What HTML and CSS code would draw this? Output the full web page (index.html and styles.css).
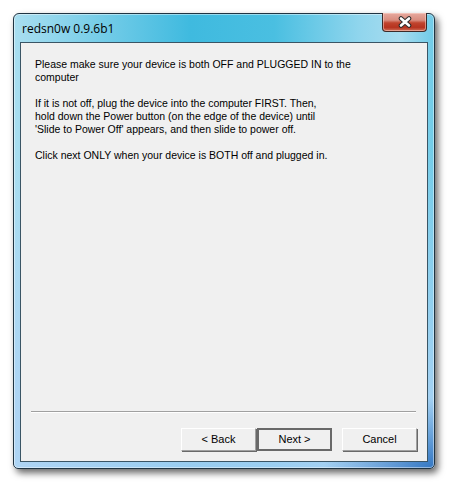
FILE: index.html
```html
<!DOCTYPE html>
<html>
<head>
<meta charset="utf-8">
<link rel="stylesheet" href="styles.css">
</head>
<body>
<div class="window">
  <div class="titlebar">
    <div class="title">redsn0w 0.9.6b1</div>
    <div class="close">
      <svg width="16" height="12" viewBox="0 0 16 12">
        <path d="M4 2.5 L12 9.5 M12 2.5 L4 9.5" stroke="#2b2b2b" stroke-width="4.6" stroke-linecap="round" fill="none"/>
        <path d="M4 2.5 L12 9.5 M12 2.5 L4 9.5" stroke="#ffffff" stroke-width="2.6" stroke-linecap="round" fill="none"/>
      </svg>
    </div>
  </div>
  <div class="client">
    <div class="content">
      <p>Please make sure your device is both OFF and PLUGGED IN to the<br>computer</p>
      <p>If it is not off, plug the device into the computer FIRST. Then,<br>hold down the Power button (on the edge of the device) until<br>'Slide to Power Off' appears, and then slide to power off.</p>
      <p>Click next ONLY when your device is BOTH off and plugged in.</p>
    </div>
    <div class="separator"></div>
    <div class="buttons">
      <div class="btn">&lt; Back</div>
      <div class="btn default">Next &gt;</div>
      <div class="btn cancel">Cancel</div>
    </div>
  </div>
</div>
</body>
</html>
```

FILE: styles.css
```css
html, body {
  margin: 0;
  padding: 0;
  background: #ffffff;
}
body {
  width: 449px;
  height: 484px;
  overflow: hidden;
}
.window {
  margin: 13px 0 0 13px;
  width: 422px;
  height: 456px;
  box-sizing: border-box;
  border: 1px solid #1f3442;
  border-radius: 6px 6px 5px 5px;
  display: flex;
  flex-direction: column;
  background:
    radial-gradient(ellipse 110px 70px at 100% 100%, rgba(40,110,190,0.9), rgba(40,110,190,0) 100%),
    linear-gradient(to bottom, rgba(255,255,255,0) 0%, rgba(255,255,255,0) 30%, rgba(175,210,245,0.8) 85%, rgba(175,210,245,0.8) 100%),
    linear-gradient(to right, #a9def0 0%, #7ccfe9 18%, #3fbadf 42%, #4abfe1 62%, #8fd5ed 82%, #a7dcef 92%, #6fcbe8 100%);
  box-shadow: 3px 4px 7px rgba(0,0,0,0.6), inset 0 0 0 1px rgba(255,255,255,0.45);
}
.titlebar {
  height: 28px;
  display: flex;
  justify-content: space-between;
  align-items: flex-start;
}
.title {
  font-family: "Open Sans", "Noto Sans", sans-serif;
  font-size: 12px;
  color: #000;
  padding: 7px 0 0 8px;
  line-height: 16px;
}
.close {
  width: 45px;
  height: 19px;
  margin: -1px 7px 0 0;
  box-sizing: border-box;
  border: 1px solid #3d2a28;
  border-top: none;
  border-radius: 0 0 4px 4px;
  background: linear-gradient(to bottom, #e6a99e 0%, #d98c7e 40%, #c0442e 55%, #b6331f 80%, #d0705a 100%);
  box-shadow: inset 0 0 0 1px rgba(255,220,210,0.5);
  display: flex;
  align-items: center;
  justify-content: center;
}
.close svg {
  display: block;
}
.client {
  flex: 1;
  margin: 0 6px 6px 6px;
  border: 1px solid #3a5565;
  background: #f0f0f0;
  display: flex;
  flex-direction: column;
}
.content {
  flex: 1;
  padding: 15px 20px 0 14px;
  font-family: "Liberation Sans", Arial, sans-serif;
  font-size: 10.5px;
  line-height: 13px;
  color: #000;
  white-space: nowrap;
}
.content p {
  margin: 0 0 13px 0;
}
.separator {
  margin: 0 11px 0 10px;
  height: 0;
  border-top: 1px solid #a0a0a0;
  border-bottom: 1px solid #ffffff;
}
.buttons {
  display: flex;
  justify-content: flex-end;
  padding: 15px 10px 10px 0;
}
.btn {
  width: 75px;
  height: 23px;
  box-sizing: border-box;
  border: 1px solid;
  border-color: #ffffff #a0a0a0 #a0a0a0 #ffffff;
  box-shadow: 1px 1px 0 #696969;
  background: #f0f0f0;
  font-family: "Liberation Sans", Arial, sans-serif;
  font-size: 11px;
  line-height: 21px;
  text-align: center;
  color: #000;
}
.btn.default {
  border: 2px solid #696969;
  box-shadow: none;
  line-height: 19px;
  margin-left: 1px;
}
.btn.cancel {
  margin-left: 10px;
}
```
